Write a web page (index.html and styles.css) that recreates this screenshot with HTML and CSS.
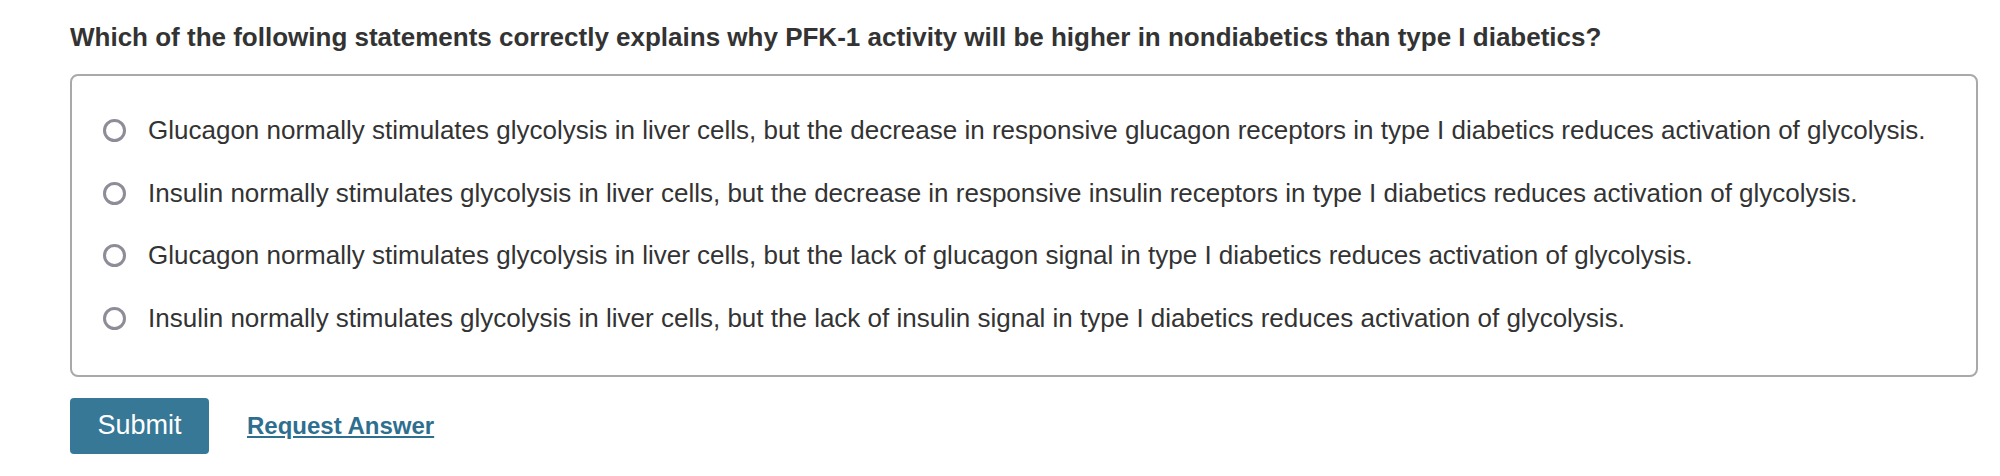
FILE: index.html
```html
<!DOCTYPE html>
<html lang="en">
<head>
  <meta charset="UTF-8">
  <meta name="viewport" content="width=device-width, initial-scale=1.0">
  <title>Question</title>
  <link rel="stylesheet" href="styles.css">
</head>
<body>
  <main class="question">
    <h2 class="prompt">Which of the following statements correctly explains why PFK-1 activity will be higher in nondiabetics than type I diabetics?</h2>
    <div class="choices">
      <label class="choice"><span class="radio"></span>Glucagon normally stimulates glycolysis in liver cells, but the decrease in responsive glucagon receptors in type I diabetics reduces activation of glycolysis.</label>
      <label class="choice"><span class="radio"></span>Insulin normally stimulates glycolysis in liver cells, but the decrease in responsive insulin receptors in type I diabetics reduces activation of glycolysis.</label>
      <label class="choice"><span class="radio"></span>Glucagon normally stimulates glycolysis in liver cells, but the lack of glucagon signal in type I diabetics reduces activation of glycolysis.</label>
      <label class="choice"><span class="radio"></span>Insulin normally stimulates glycolysis in liver cells, but the lack of insulin signal in type I diabetics reduces activation of glycolysis.</label>
    </div>
    <div class="actions">
      <button class="submit">Submit</button>
      <a class="request" href="#">Request Answer</a>
    </div>
  </main>
</body>
</html>
```

FILE: styles.css
```css
body {
  margin: 0;
  background: #fff;
  color: #333;
  font-family: "Liberation Sans", Arial, Helvetica, sans-serif;
}
.question {
  padding: 22px 22px 0 70px;
}
.prompt {
  margin: 0;
  font-size: 26px;
  line-height: 30px;
  font-weight: bold;
}
.choices {
  margin-top: 22px;
  border: 2px solid #a9a9a9;
  border-radius: 8px;
  padding: 23px 31px 25px;
}
.choice {
  display: flex;
  align-items: center;
  font-size: 26px;
  line-height: 32.67px;
  padding: 15px 0;
}
.radio {
  flex: none;
  width: 17px;
  height: 17px;
  border: 3.5px solid #8d8d99;
  border-radius: 50%;
  margin-right: 22px;
}
.actions {
  display: flex;
  align-items: center;
  margin-top: 21px;
}
.submit {
  width: 139px;
  height: 56px;
  border: none;
  border-radius: 4px;
  background: #367896;
  color: #fff;
  font-family: inherit;
  font-size: 27px;
}
.request {
  margin-left: 38px;
  color: #2e6f8f;
  font-weight: bold;
  font-size: 24px;
  text-decoration: underline;
}
```
